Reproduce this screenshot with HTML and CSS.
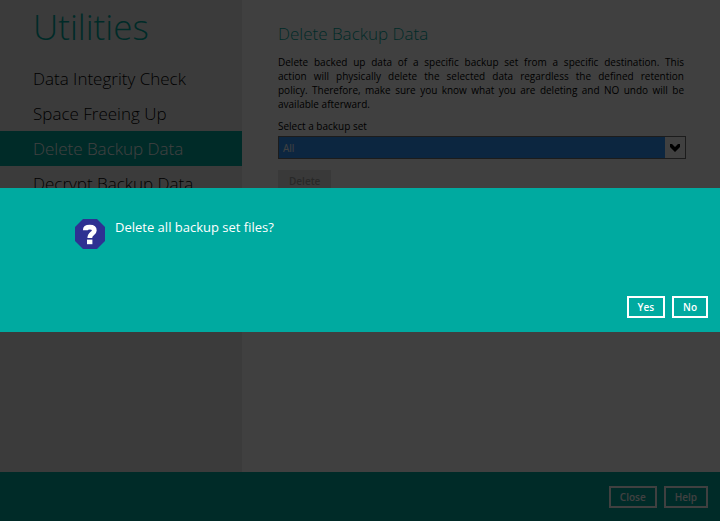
FILE: index.html
```html
<!DOCTYPE html>
<html lang="en">
<head>
<meta charset="utf-8">
<title>Utilities</title>
<link rel="stylesheet" href="styles.css">
</head>
<body>
<div class="app">
  <div class="content">
    <aside class="sidebar">
      <h1 class="title">Utilities</h1>
      <nav class="nav">
        <a class="nav-item" href="#integrity">Data Integrity Check</a>
        <a class="nav-item" href="#space">Space Freeing Up</a>
        <a class="nav-item active" href="#delete">Delete Backup Data</a>
        <a class="nav-item" href="#decrypt">Decrypt Backup Data</a>
      </nav>
    </aside>
    <main class="main">
      <h2 class="heading">Delete Backup Data</h2>
      <p class="description">
        <span class="line">Delete backed up data of a specific backup set from a specific destination. This</span>
        <span class="line">action will physically delete the selected data regardless the defined retention</span>
        <span class="line">policy. Therefore, make sure you know what you are deleting and NO undo will be</span>
        available afterward.
      </p>
      <label class="label" for="backup-set">Select a backup set</label>
      <div class="select-box">
        <select class="select" id="backup-set">
          <option>All</option>
        </select>
        <span class="arrow">
          <svg width="10" height="8" viewBox="0 0 10 8"><path d="M0 0 L2 0 L5 3 L8 0 L10 0 V3 L5 8 L0 3 Z" fill="#000"/></svg>
        </span>
      </div>
      <button class="delete" type="button" disabled>Delete</button>
    </main>
  </div>
  <footer class="footer">
    <button class="button" type="button">Close</button>
    <button class="button" type="button">Help</button>
  </footer>
</div>
<div class="overlay">
  <section class="dialog" role="dialog" aria-labelledby="question">
    <div class="message">
      <svg class="icon" width="30" height="30" viewBox="0 0 30 30">
        <path d="M8 0H22L30 8V22L22 30H8L0 22V8Z" fill="#2e3192"/>
        <path d="M10.3 11.2C10.3 9 12 8.2 14.8 8.2C17.8 8.2 19.3 9.2 19.3 11.4C19.3 14.6 14.8 14.2 14.8 19" fill="none" stroke="#fff" stroke-width="4.8"/>
        <path d="M12 20.6H17.4V25.2H12Z" fill="#fff"/>
      </svg>
      <p class="question" id="question">Delete all backup set files?</p>
    </div>
    <div class="actions">
      <button class="button" type="button">Yes</button>
      <button class="button" type="button">No</button>
    </div>
  </section>
</div>
</body>
</html>
```
FILE: styles.css
```css
* {
  box-sizing: border-box;
}

body {
  margin: 0;
  font-family: "Open Sans", "Noto Sans", sans-serif;
  font-size: 10px;
  color: #000;
  background: #fff;
}

h1, h2, p {
  margin: 0;
}

.app {
  display: flex;
  flex-direction: column;
  height: 100vh;
  overflow: hidden;
}

.content {
  display: flex;
  flex: 1;
  min-height: 0;
}

.sidebar {
  flex: 0 0 242px;
  background: #ececec;
}

.title {
  padding: 3px 33px 10px;
  font-size: 35px;
  font-weight: 300;
  line-height: 48px;
  color: #00aaa0;
}

.nav-item {
  display: block;
  padding: 1px 33px 0;
  font-size: 17px;
  font-weight: 300;
  line-height: 34px;
  color: #000;
  text-decoration: none;
}

.nav-item.active {
  color: #fff;
  background: #00aaa0;
}

.main {
  flex: 1;
  min-width: 0;
  padding: 22px 34px 0 36px;
}

.heading {
  margin-bottom: 9px;
  font-size: 17px;
  font-weight: 300;
  line-height: 24px;
  color: #00aaa0;
}

.description {
  margin: 0 2px 7px 0;
  line-height: 14px;
}

.line {
  display: block;
  text-align: justify;
  text-align-last: justify;
}

.label {
  display: block;
  line-height: 16px;
}

.select-box {
  display: flex;
  height: 23px;
  margin: 2px 0 11px;
  border: 1px solid #707070;
}

.select {
  flex: 1;
  min-width: 0;
  padding: 0 4px;
  border: 0;
  border-radius: 0;
  appearance: none;
  font: inherit;
  color: #fff;
  background: #3399ff;
}

.arrow {
  display: flex;
  flex: 0 0 20px;
  align-items: center;
  justify-content: center;
}

.delete {
  height: 22px;
  padding: 0 11px;
  border: 0;
  font: inherit;
  font-weight: 600;
  color: #a0a0a0;
  background: #e2e2e2;
}

.footer {
  display: flex;
  flex: 0 0 49px;
  gap: 7px;
  align-items: center;
  justify-content: flex-end;
  padding-right: 12px;
  background: #00aaa0;
}

.button {
  height: 22px;
  padding: 0 9px;
  border: 2px solid #fff;
  font: inherit;
  font-size: 10px;
  font-weight: 600;
  color: #fff;
  background: transparent;
}

.overlay {
  position: fixed;
  inset: 0;
  display: flex;
  align-items: center;
  padding-bottom: 1px;
  background: rgba(0, 0, 0, 0.75);
}

.dialog {
  display: flex;
  flex-direction: column;
  justify-content: space-between;
  width: 100%;
  min-height: 144px;
  padding: 31px 12px 14px;
  color: #fff;
  background: #00aaa0;
}

.message {
  display: flex;
  gap: 10px;
  padding-left: 63px;
}

.question {
  font-size: 13px;
  line-height: 16px;
}

.actions {
  display: flex;
  gap: 7px;
  justify-content: flex-end;
}
```
